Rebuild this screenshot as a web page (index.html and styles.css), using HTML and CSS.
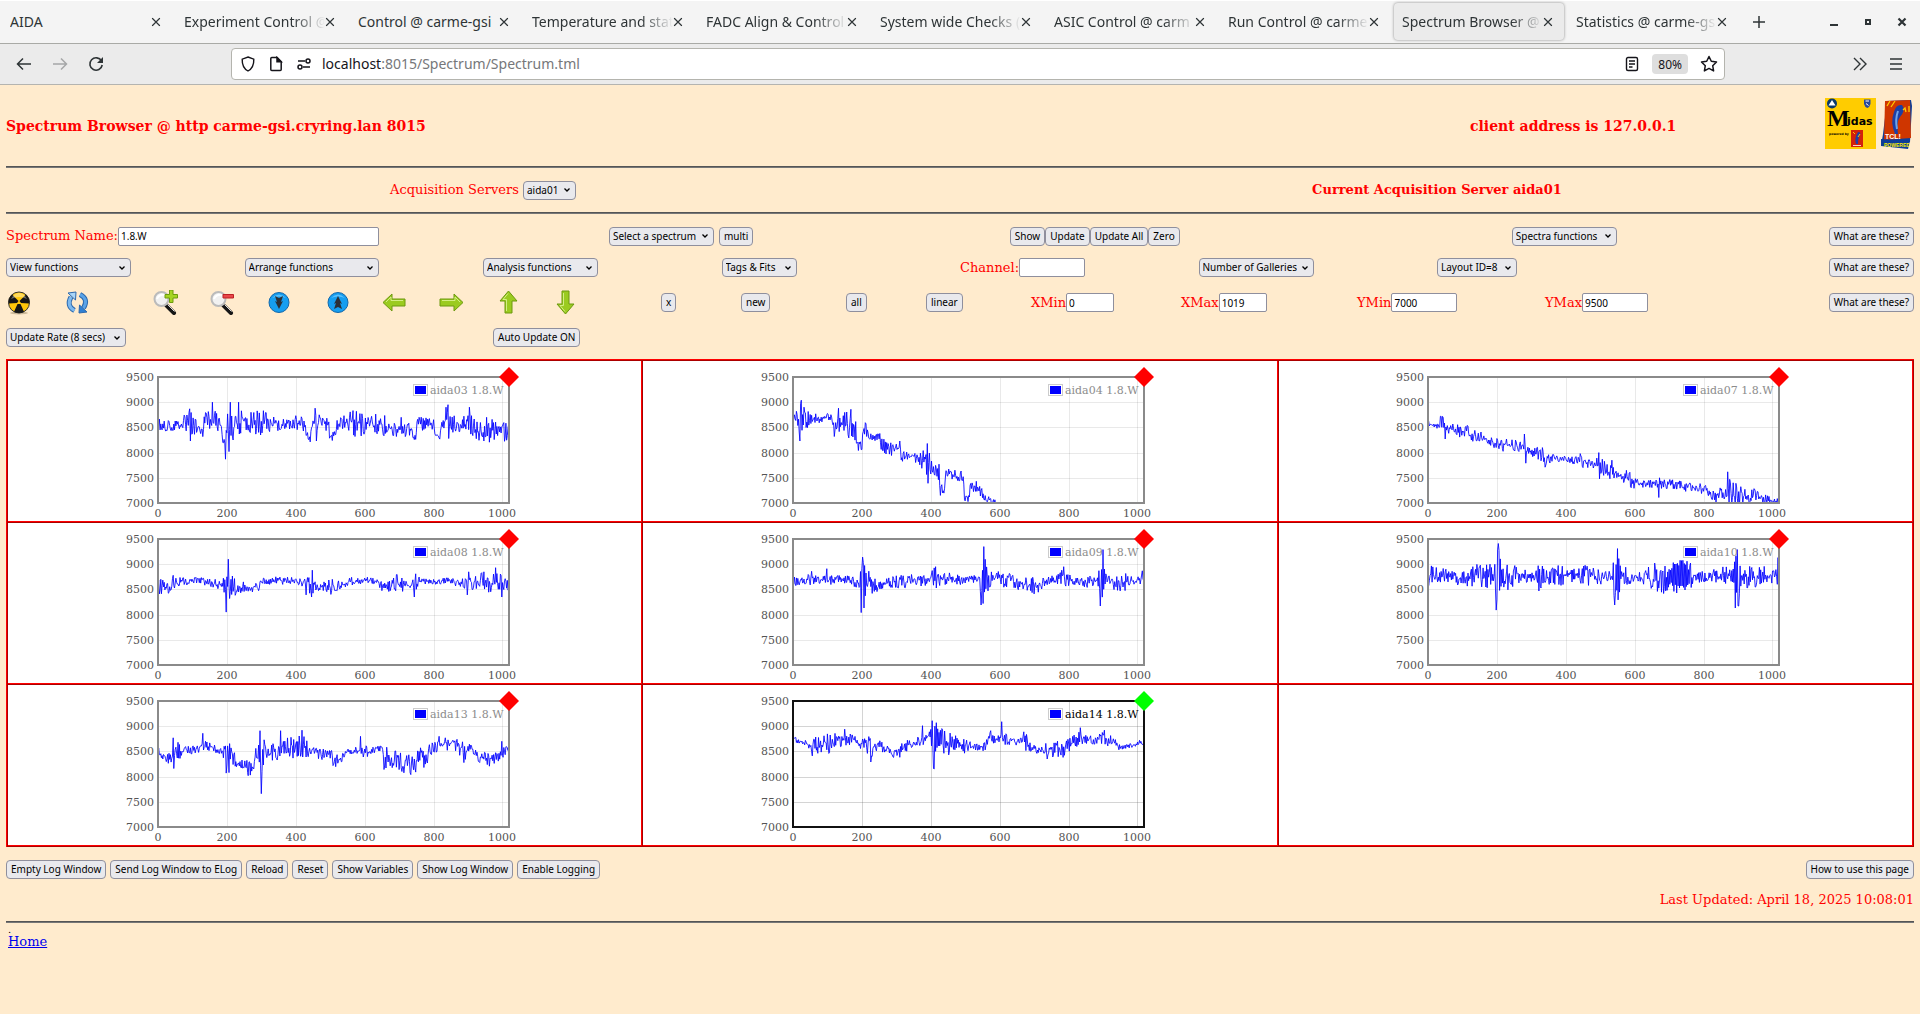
FILE: index.html
```html
<!DOCTYPE html>
<html lang="en">
<head>
<meta charset="utf-8">
<title>Spectrum Browser @ carme-gsi</title>
<link rel="stylesheet" href="styles.css">
</head>
<body>
<header class="browser">
  <nav class="tabs" aria-label="Tabs">
    <div class="tab"><span class="tab-label">AIDA</span><button class="tab-close" aria-label="Close tab"></button></div>
    <div class="tab"><span class="tab-label tab-long">Experiment Control @</span><button class="tab-close" aria-label="Close tab"></button></div>
    <div class="tab"><span class="tab-label">Control @ carme-gsi</span><button class="tab-close" aria-label="Close tab"></button></div>
    <div class="tab"><span class="tab-label tab-long">Temperature and stat</span><button class="tab-close" aria-label="Close tab"></button></div>
    <div class="tab"><span class="tab-label tab-long">FADC Align &amp; Control</span><button class="tab-close" aria-label="Close tab"></button></div>
    <div class="tab"><span class="tab-label tab-long">System wide Checks (</span><button class="tab-close" aria-label="Close tab"></button></div>
    <div class="tab"><span class="tab-label tab-long">ASIC Control @ carm</span><button class="tab-close" aria-label="Close tab"></button></div>
    <div class="tab"><span class="tab-label tab-long">Run Control @ carme</span><button class="tab-close" aria-label="Close tab"></button></div>
    <div class="tab tab-active"><span class="tab-label tab-long">Spectrum Browser @</span><button class="tab-close" aria-label="Close tab"></button></div>
    <div class="tab"><span class="tab-label tab-long">Statistics @ carme-gs</span><button class="tab-close" aria-label="Close tab"></button></div>
    <button class="icon-btn new-tab" aria-label="New tab"><svg width="14" height="14" viewBox="0 0 14 14"><path d="M7 1v12M1 7h12" stroke="#2e3436" stroke-width="1.5"/></svg></button>
    <div class="window-controls">
      <button class="icon-btn" aria-label="Minimize"><svg width="12" height="12" viewBox="0 0 12 12"><path d="M2 8h8v2H2z" fill="#2e3436"/></svg></button>
      <button class="icon-btn" aria-label="Maximize"><svg width="12" height="12" viewBox="0 0 12 12"><path d="M4 4h4v4H4z" fill="none" stroke="#2e3436" stroke-width="2"/></svg></button>
      <button class="icon-btn" aria-label="Close"><svg width="12" height="12" viewBox="0 0 12 12"><path d="M2.500 2.500l7 7M9.500 2.500l-7 7" stroke="#2e3436" stroke-width="2.200"/></svg></button>
    </div>
  </nav>
  <div class="toolbar">
    <div class="nav-buttons">
      <button class="icon-btn" aria-label="Back"><svg width="16" height="16" viewBox="0 0 16 16" fill="none" stroke="#2e3436" stroke-width="1.500"><path d="M15 8H1.500M7 2.500L1.500 8 7 13.500"/></svg></button>
      <button class="icon-btn" aria-label="Forward"><svg width="16" height="16" viewBox="0 0 16 16" fill="none" stroke="#a5a7a8" stroke-width="1.500"><path d="M1 8h13.500M9 2.500L14.500 8 9 13.500"/></svg></button>
      <button class="icon-btn" aria-label="Reload"><svg width="16" height="16" viewBox="0 0 16 16"><path d="M13.500 5A6.200 6.200 0 1 0 14.200 9" fill="none" stroke="#2e3436" stroke-width="1.600"/><path d="M15 1v6H9z" fill="#2e3436"/></svg></button>
    </div>
    <div class="urlbar">
      <svg width="16" height="16" viewBox="0 0 16 16" fill="none" stroke="#15141a" stroke-width="1.400"><path d="M8 1l5.800 2.200C14 8.500 12.500 12.500 8 15 3.500 12.500 2 8.500 2.200 3.200z"/></svg>
      <svg width="16" height="16" viewBox="0 0 16 16" fill="none" stroke="#15141a" stroke-width="1.500"><path d="M2.800 2.500q0-1 1-1H9l4.200 4.200v7.800q0 1-1 1H3.800q-1 0-1-1z"/><path d="M9 1.500v4.200h4.200z" fill="#15141a"/></svg>
      <svg width="16" height="16" viewBox="0 0 16 16" fill="none" stroke="#15141a" stroke-width="1.500"><path d="M2 5h7M7 11h7"/><circle cx="12" cy="5" r="2"/><circle cx="4" cy="11" r="2"/></svg>
      <div class="address"><span class="host">localhost</span>:8015/Spectrum/Spectrum.tml</div>
      <svg width="16" height="16" viewBox="0 0 16 16" fill="none" stroke="#15141a" stroke-width="1.400"><rect x="2.500" y="1.500" width="11" height="13" rx="1.500"/><path d="M5 5h6M5 8h6M5 11h3.500"/></svg>
      <button class="zoom-level">80%</button>
      <svg width="18" height="18" viewBox="0 0 18 18" fill="none" stroke="#15141a" stroke-width="1.500" stroke-linejoin="round"><path d="M9 1.500l2.300 4.800 5.200.700-3.800 3.700.900 5.200L9 13.400l-4.600 2.500.900-5.200L1.500 7l5.200-.700z"/></svg>
    </div>
    <div class="toolbar-end">
      <button class="icon-btn" aria-label="More tools"><svg width="16" height="16" viewBox="0 0 16 16" fill="none" stroke="#2e3436" stroke-width="1.400"><path d="M2 2l6 6-6 6M8 2l6 6-6 6"/></svg></button>
      <button class="icon-btn" aria-label="Menu"><svg width="16" height="16" viewBox="0 0 16 16" stroke="#2e3436" stroke-width="1.500"><path d="M2 3h12M2 8h12M2 13h12"/></svg></button>
    </div>
  </div>
</header>

<main class="page">
  <div class="banner">
    <h1 class="title">Spectrum Browser @ http carme-gsi.cryring.lan 8015</h1>
    <div class="title client">client address is 127.0.0.1</div>
    <div class="logos">
      <svg width="51" height="51" viewBox="0 0 51 51" role="img" aria-label="Midas">
        <rect width="51" height="51" fill="#fc0"/>
        <circle cx="7" cy="5.500" r="5" fill="#0b3a6b"/><path d="M3.500 7.500L7 2l3.500 5.500z" fill="#fff"/>
        <path d="M39 1.500h6.500V6q-1 3.500-3.200 4Q40 9.500 39 6z" fill="#2a4a9a"/><path d="M40.500 3h3.500M41 5.500l2.500 2" stroke="#fff"/>
        <text x="2" y="28" class="logo-m">M</text><text x="22" y="27" class="logo-idas">idas</text>
        <text x="4" y="37" class="logo-by">powered by</text>
        <rect x="26" y="32" width="12" height="17" fill="#d3210b"/><path d="M31 46q-2-6 2-12 4 0 1 5-1 2-1 7z" fill="#1c3fa8"/><path d="M28 34l2 2M35 36l-2 3" stroke="#fc0"/><path d="M28 47.500h8" stroke="#fff" stroke-width=".8"/>
      </svg>
      <svg width="32" height="51" viewBox="0 0 32 51" role="img" aria-label="Tcl powered">
        <path d="M2 36L6 3l24-1 1 6-2 36-28-2z" fill="#0d3d99"/><path d="M4 3L29 2l1 38-27 2z" fill="#cf3600"/>
        <path d="M14 36q-5-12-1-22 2-8 8-7 4 5-2 12-4 5-2 17z" fill="#1b3fa6"/><path d="M16 31q-2-10 1-18" fill="none" stroke="#6fa5e8" stroke-width="2"/>
        <path d="M6 8l3-5M10 9l4-6M22 12l2-2 1 4M28 8v6" fill="none" stroke="#ffc800" stroke-width="1.300"/>
        <path d="M0 41l29 2-2 8-27-3z" fill="#0d3d99"/>
        <text x="4" y="41" class="logo-tcl">TCL!</text><text x="3" y="49" class="logo-pow">POWERED</text>
      </svg>
    </div>
  </div>
  <hr>
  <div class="servers">
    <div><label for="server">Acquisition Servers</label> <select id="server"><option>aida01</option></select></div>
    <div><strong>Current Acquisition Server aida01</strong></div>
  </div>
  <hr>

  <form class="controls">
    <div class="row row-spectrum">
      <div class="field"><label for="name">Spectrum Name:</label><input id="name" class="w-name" type="text" value="1.8.W"></div>
      <div class="pair"><select class="w-105" aria-label="Spectrum"><option>Select a spectrum</option></select><button type="button">multi</button></div>
      <div class="field"><button type="button">Show</button><button type="button">Update</button><button type="button">Update All</button><button type="button">Zero</button></div>
      <div><select class="w-105" aria-label="Spectra functions"><option>Spectra functions</option></select></div>
      <button type="button" class="help">What are these?</button>
    </div>
    <div class="row row-functions">
      <div><select class="w-125" aria-label="View functions"><option>View functions</option></select></div>
      <div><select class="w-134" aria-label="Arrange functions"><option>Arrange functions</option></select></div>
      <div><select class="w-115" aria-label="Analysis functions"><option>Analysis functions</option></select></div>
      <div><select class="w-75" aria-label="Tags and fits"><option>Tags &amp; Fits</option></select></div>
      <div class="field"><label for="channel">Channel:</label><input id="channel" class="w-wide" type="text"></div>
      <div><select class="w-115" aria-label="Number of galleries"><option>Number of Galleries</option></select></div>
      <div><select class="w-80" aria-label="Layout"><option>Layout ID=8</option></select></div>
      <button type="button" class="help">What are these?</button>
    </div>
    <div class="row row-tools">
      <button type="button" class="icon-btn" aria-label="Zero all"><svg width="25" height="25" viewBox="0 0 25 25"><ellipse cx="13" cy="23" rx="9" ry="1.500" fill="#cdb999"/><circle cx="13" cy="12.500" r="10.500" fill="#ffc60a" stroke="#333"/><g fill="#161616"><path d="M11.500 11L8 3.300a10.500 10.500 0 0 1 10 0L14.500 11z" transform="rotate(180 13 12.500)"/><path d="M11 13l-8.400.500a10.500 10.500 0 0 1 3.400-9L12.500 11z"/><path d="M15 13l8.400.500a10.500 10.500 0 0 0-3.400-9L13.500 11z"/></g><path d="M5 9q3-6 8-6t8 6q-8-4-16 0z" fill="#fff" opacity=".35"/></svg></button>
      <button type="button" class="icon-btn" aria-label="Refresh"><svg width="25" height="25" viewBox="0 0 25 25" fill="none"><path d="M9.500 20.500Q1 16 6 7" stroke="#2d69ad" stroke-width="5"/><path d="M9.500 20.500Q1 16 6 7" stroke="#7db9ef" stroke-width="3"/><path d="M3 3l8-1-.5 8z" fill="#a9d5f8" stroke="#2d69ad"/><path d="M15 4.500Q24 9 18.500 18" stroke="#2d69ad" stroke-width="5"/><path d="M15 4.500Q24 9 18.500 18" stroke="#5aa3e8" stroke-width="3"/><path d="M22 22l-8 1 .5-8z" fill="#2f7fd3" stroke="#2d69ad"/></svg></button>
      <button type="button" class="icon-btn" aria-label="Zoom in"><svg width="25" height="25" viewBox="0 0 25 25"><path d="M13 15l8 8" stroke="#161616" stroke-width="4" stroke-linecap="round"/><path d="M14.500 14.500l7 7" stroke="#ddd"/><circle cx="8.500" cy="9" r="7" fill="#f1f1f1" stroke="#bbb" stroke-width="2"/><path d="M4 9q2-5 8-4" fill="none" stroke="#fff" stroke-width="2"/><path d="M16.500 0h3.500v4.500h4.500V8H20v4.500h-3.500V8H12V4.500h4.500z" fill="#a5d423" stroke="#6c9b0c"/></svg></button>
      <button type="button" class="icon-btn" aria-label="Zoom out"><svg width="25" height="25" viewBox="0 0 25 25"><path d="M13 15l8 8" stroke="#161616" stroke-width="4" stroke-linecap="round"/><path d="M14.500 14.500l7 7" stroke="#ddd"/><circle cx="8.500" cy="9" r="7" fill="#f1f1f1" stroke="#bbb" stroke-width="2"/><path d="M4 9q2-5 8-4" fill="none" stroke="#fff" stroke-width="2"/><path d="M13 4.500h10.500V8H13z" fill="#e8474a" stroke="#bd2125"/></svg></button>
      <button type="button" class="icon-btn" aria-label="Compress"><svg width="25" height="25" viewBox="0 0 25 25"><circle cx="12" cy="12.500" r="10" fill="#169ef0" stroke="#1267ab"/><path d="M5 8q7-7 14 0-7-3-14 0z" fill="#5cc0fb"/><path d="M8 6l4 2 4-2-2 6 2-1-4 8-4-8 2 1z" fill="#2b3038"/></svg></button>
      <button type="button" class="icon-btn" aria-label="Expand"><svg width="25" height="25" viewBox="0 0 25 25"><circle cx="12" cy="12.500" r="10" fill="#169ef0" stroke="#1267ab"/><path d="M5 8q7-7 14 0-7-3-14 0z" fill="#5cc0fb"/><path d="M8 19l4-2 4 2-2-6 2 1-4-8-4 8 2-1z" fill="#2b3038"/></svg></button>
      <button type="button" class="icon-btn" aria-label="Left"><svg width="25" height="25" viewBox="0 0 25 25"><path d="M1 12.500L10 4v5h13v7H10v5z" fill="#9bcb20" stroke="#6c990f"/><path d="M4 12l5-5v3.500h12" fill="none" stroke="#d4ee83"/></svg></button>
      <button type="button" class="icon-btn" aria-label="Right"><svg width="25" height="25" viewBox="0 0 25 25"><path d="M24 12.500L15 4v5H1v7h14v5z" fill="#9bcb20" stroke="#6c990f"/><path d="M3 10.500h13V7l5 5" fill="none" stroke="#d4ee83"/></svg></button>
      <button type="button" class="icon-btn" aria-label="Up"><svg width="25" height="25" viewBox="0 0 25 25"><path d="M12.500 1L4 11h5v12h7V11h5z" fill="#9bcb20" stroke="#6c990f"/><path d="M10.500 21V9.500H7l5-6" fill="none" stroke="#d4ee83"/></svg></button>
      <button type="button" class="icon-btn" aria-label="Down"><svg width="25" height="25" viewBox="0 0 25 25"><path d="M12.500 24L4 14h5V1h7v13h5z" fill="#9bcb20" stroke="#6c990f"/><path d="M10.500 3v12.500H7l5 6" fill="none" stroke="#d4ee83"/></svg></button>
      <div><button type="button">x</button></div>
      <div><button type="button">new</button></div>
      <div><button type="button">all</button></div>
      <div><button type="button">linear</button></div>
      <div class="field"><label for="xmin">XMin</label><input id="xmin" class="w-narrow" type="text" value="0"></div>
      <div class="field"><label for="xmax">XMax</label><input id="xmax" class="w-narrow" type="text" value="1019"></div>
      <div class="field"><label for="ymin">YMin</label><input id="ymin" class="w-wide" type="text" value="7000"></div>
      <div class="field"><label for="ymax">YMax</label><input id="ymax" class="w-wide" type="text" value="9500"></div>
      <button type="button" class="help">What are these?</button>
    </div>
    <div class="row row-update">
      <div><select class="w-120" aria-label="Update rate"><option>Update Rate (8 secs)</option></select></div>
      <div><button type="button">Auto Update ON</button></div>
    </div>
  </form>

  <section class="gallery" id="gallery" aria-label="Spectra"></section>

  <div class="actions">
    <button type="button">Empty Log Window</button>
    <button type="button">Send Log Window to ELog</button>
    <button type="button">Reload</button>
    <button type="button">Reset</button>
    <button type="button">Show Variables</button>
    <button type="button">Show Log Window</button>
    <button type="button">Enable Logging</button>
    <button type="button" class="help">How to use this page</button>
  </div>
  <p class="updated">Last Updated: April 18, 2025 10:08:01</p>
  <hr>
  <div class="home"><span class="dot">.</span><a href="#">Home</a></div>
</main>
<script src="charts.js"></script>
</body>
</html>
```
FILE: styles.css
```css
* { box-sizing: border-box; }

body {
  margin: 0;
  min-height: 100vh;
  background: #ffebcd;
  color: #f00;
  font: 13px/16px "DejaVu Serif", serif;
}

button, select, input {
  margin: 0;
  height: 19px;
  font: 10px/15px "Noto Sans", sans-serif;
  color: #000;
  white-space: nowrap;
}

button, select {
  padding: 0 4px;
  background: #e9e9ed;
  border: 1px solid #8f8f9d;
  border-radius: 4px;
}

select {
  appearance: none;
  padding: 0 16px 0 3px;
  background: #e9e9ed url("data:image/svg+xml,%3Csvg xmlns='http://www.w3.org/2000/svg' width='8' height='6'%3E%3Cpath d='M1.500 1.500l2.500 2.500 2.500-2.500' fill='none' stroke='black' stroke-width='1.300'/%3E%3C/svg%3E") no-repeat right 4px center;
}

input {
  padding: 0 2px;
  background: #fff;
  border: 1px solid #8f8f9d;
  border-radius: 2px;
}

.icon-btn {
  display: flex;
  align-items: center;
  justify-content: center;
  height: auto;
  padding: 0;
  background: none;
  border: 0;
}

/* Browser window */
.browser {
  background: #ebebeb;
  border-bottom: 1px solid #b4b4b0;
  color: #2e3436;
  font: 14px/20px "Noto Sans", sans-serif;
}

.tabs {
  display: flex;
  align-items: center;
  height: 44px;
  padding-bottom: 1px;
  background: #f4f4f4;
  border-top: 1px solid #fff;
  border-bottom: 1px solid #a9aaa6;
}

.tab {
  display: flex;
  align-items: center;
  flex: 0 1 170px;
  height: 37px;
  margin: 0 2px;
  padding: 0 8px;
  border-radius: 4px;
  min-width: 0;
}

.tab-active {
  background: #ebebeb;
  box-shadow: 0 0 3px #888;
}

.tab-label {
  flex: 1;
  overflow: hidden;
  white-space: nowrap;
}

.tab-long { mask-image: linear-gradient(to left, transparent, #000 32px); }

.tab-close {
  flex: none;
  width: 10px;
  height: 10px;
  margin-right: 3px;
  padding: 0;
  border: 0;
  background: url("data:image/svg+xml,%3Csvg xmlns='http://www.w3.org/2000/svg' width='10' height='10'%3E%3Cpath d='M1 1l8 8M9 1l-8 8' stroke='%232e3436' stroke-width='1.200'/%3E%3C/svg%3E") no-repeat center;
}

.new-tab { margin-left: 12px; }

.window-controls {
  display: flex;
  gap: 22px;
  margin-left: auto;
  padding-right: 12px;
}

.toolbar {
  display: flex;
  align-items: center;
  height: 40px;
}

.nav-buttons {
  display: flex;
  gap: 20px;
  width: 231px;
  padding-left: 16px;
}

.urlbar {
  display: flex;
  align-items: center;
  flex: 1;
  gap: 12px;
  height: 32px;
  padding: 0 6px 0 8px;
  background: #fff;
  border: 1px solid #b4b4ae;
  border-radius: 4px;
}

.address { flex: 1; color: #76777a; margin-left: -2px; }
.host { color: #15141a; }

.zoom-level {
  height: 20px;
  padding: 0 6px;
  background: #dedede;
  border: 0;
  font-size: 12px;
  color: #15141a;
}

.toolbar-end {
  display: flex;
  gap: 20px;
  width: 195px;
  justify-content: flex-end;
  padding-right: 16px;
}

/* Page */
.page { padding: 0 6px; }

hr {
  height: 2px;
  margin: 0;
  border: 0;
  background: #777;
  border-top: 1px solid #555;
}

.banner {
  display: grid;
  grid-template-columns: 1232fr 676fr;
  grid-template-rows: 81px;
  align-items: center;
}

.title { margin: 0; font-size: 14px; font-weight: bold; }
.client { grid-area: 1 / 2; justify-self: start; margin-left: 232px; }
.logos { grid-area: 1 / 2; display: flex; gap: 5px; justify-self: end; padding: 0 1px 4px 0; }

.logo-m { font: bold 24px "Liberation Serif", serif; }
.logo-idas { font: bold 11px "DejaVu Sans", sans-serif; }
.logo-by { font: bold 3px "DejaVu Sans", sans-serif; }
.logo-tcl { font: bold 7px "Liberation Sans", sans-serif; fill: #fff; }
.logo-pow { font: bold 5px "Liberation Sans", sans-serif; fill: #fe0; }

.servers {
  display: grid;
  grid-template-columns: 1fr 1fr;
  align-items: center;
  justify-items: center;
  height: 44px;
}

.controls {
  display: grid;
  gap: 12px;
  padding: 12px 0;
}

.row { display: grid; align-items: center; justify-items: start; }
.row > div { display: flex; }
.row-spectrum { height: 20px; grid-template-columns: 603fr 401fr 502fr 317fr 85fr; }
.row-functions { grid-template-columns: repeat(8, minmax(0, 1fr)); }
.row-tools {
  height: 27px;
  grid-template-columns:
    minmax(0, 59fr) minmax(0, 88fr) minmax(0, 57fr) minmax(0, 57fr) minmax(0, 59fr)
    minmax(0, 56fr) minmax(0, 57fr) minmax(0, 57fr) minmax(0, 57fr) minmax(0, 108fr)
    minmax(0, 80fr) minmax(0, 105fr) minmax(0, 80fr) minmax(0, 105fr) minmax(0, 150fr)
    minmax(0, 176fr) minmax(0, 188fr) minmax(0, 269fr) minmax(0, 100fr);
}
.row-update { grid-template-columns: 487fr 1421fr; }

.row .field { align-items: center; white-space: nowrap; }
.pair { gap: 5px; }
.row .help { justify-self: end; }

.w-name { width: 261px; }
.w-narrow { width: 48px; }
.w-wide { width: 66px; }
.w-75 { width: 75px; }
.w-80 { width: 80px; }
.w-105 { width: 105px; }
.w-115 { width: 115px; }
.w-120 { width: 120px; }
.w-125 { width: 125px; }
.w-134 { width: 134px; }

/* Gallery of spectra */
.gallery {
  display: grid;
  grid-template-columns: repeat(3, 1fr);
  border: 2px ridge #f00;
  border-right: 0;
  border-bottom: 0;
  background: #fff;
}

.cell {
  display: flex;
  justify-content: center;
  height: 162px;
  border: 2px ridge #f00;
  border-top: 0;
  border-left: 0;
}

.chart text { font: 11px "DejaVu Serif", serif; fill: #545454; }
.chart .x-tick { text-anchor: middle; }
.chart .y-tick { text-anchor: end; }
.chart .grid { stroke: #545454; stroke-opacity: .13; }
.chart .frame { fill: none; stroke: #8a8a8a; stroke-width: 2; }
.chart .trace { fill: none; stroke: #00f; stroke-width: 1; stroke-opacity: .85; stroke-linejoin: round; }
.chart .swatch-box { fill: #fff; stroke: #ccc; }
.chart .swatch { fill: #00f; }
.chart .legend { fill: #8c8c8c; }
.chart .marker { fill: #f00; }
.chart-active .frame { stroke: #111; }
.chart-active .grid { stroke-opacity: .25; }
.chart-active .legend { fill: #000; }
.chart-active .marker { fill: #0f0; }

/* Page footer */
.actions { display: flex; gap: 4px; padding-top: 13px; }
.actions .help { margin-left: auto; }
.updated { margin: 13px 0; text-align: right; }
.home { display: flex; flex-direction: column; align-items: flex-start; padding: 2px; }
.home a { color: #00e; }
.dot { color: #000; font-size: 10px; line-height: 9px; }
```
FILE: charts.js
```js
// Each spectrum: envelope points [channel, mean, half-width] and single peaks [channel, value].
const spectra = [
  { name: 'aida03', env: [[0,8550,110],[60,8530,70],[85,8570,200],[105,8560,180],[117,8520,90],[122,8380,90],[130,8380,90],[133,8640,90],[155,8680,200],[182,8640,180],[186,8320,100],[196,8280,100],[200,8550,280],[235,8600,220],[255,8570,100],[275,8600,190],[320,8620,170],[345,8550,90],[395,8570,90],[405,8600,180],[425,8580,110],[432,8320,90],[442,8320,90],[448,8590,80],[455,8570,250],[480,8570,150],[495,8600,100],[498,8320,70],[512,8340,80],[518,8520,90],[545,8600,160],[570,8570,240],[620,8580,130],[650,8570,210],[670,8480,80],[700,8450,140],[735,8450,110],[740,8300,60],[749,8310,70],[752,8560,110],[800,8600,110],[807,8290,60],[819,8310,60],[823,8580,80],[840,8580,240],[870,8560,110],[905,8550,170],[930,8430,140],[955,8440,200],[1000,8430,120],[1010,8400,160],[1019,8500,150]],
    peaks: [[92,8870],[94,8230],[158,9000],[196,7870],[206,8020],[210,9000],[218,8250],[234,9000],[242,8830],[298,8350],[456,8880],[460,8230],[576,8820],[706,8700],[836,8900],[842,8950],[844,8280],[904,8900],[954,8700]] },
  { name: 'aida04', env: [[0,8680,50],[12,8680,120],[22,8650,250],[34,8660,160],[55,8660,100],[75,8680,80],[112,8700,60],[118,8480,120],[130,8500,220],[150,8580,200],[174,8560,230],[182,8450,260],[190,8200,130],[200,8150,80],[206,8560,130],[220,8320,130],[238,8280,80],[248,8370,60],[256,8180,110],[275,8060,110],[300,8080,120],[315,7940,90],[350,7910,50],[370,7890,150],[390,7850,250],[402,7700,120],[420,7620,90],[430,7350,120],[440,7300,80],[444,7620,70],[470,7550,80],[494,7540,90],[498,7120,60],[512,7080,80],[515,7310,90],[540,7270,70],[560,7080,80],[585,7020,50],[600,6990,20],[610,6940,10],[1019,6900,0]],
    peaks: [[20,8230],[24,9040],[32,8900],[132,8880],[168,8860],[310,8230],[390,8180],[392,7390],[428,7150],[424,7770],[532,7430]] },
  { name: 'aida07', env: [[0,8620,30],[8,8520,60],[28,8530,60],[36,8580,160],[50,8480,130],[70,8500,50],[95,8430,130],[125,8340,140],[150,8320,80],[180,8230,60],[205,8160,130],[230,8150,90],[270,8130,90],[290,8070,110],[310,8000,80],[340,7930,140],[370,7880,50],[410,7860,50],[435,7820,110],[480,7780,70],[500,7740,170],[530,7600,130],[560,7550,80],[585,7460,150],[610,7380,60],[640,7390,60],[680,7370,90],[730,7370,70],[760,7310,90],[810,7260,90],[835,7160,110],[865,7220,160],[890,7160,190],[925,7150,160],[960,7160,90],[990,7040,80],[1019,7020,50]],
    peaks: [[36,8720],[50,8270],[280,8370],[284,7790],[340,7710],[442,7980],[496,8000],[498,7480],[534,7850],[670,7110],[672,7500],[870,7620],[876,7470],[836,7010],[886,7400]] },
  { name: 'aida08', env: [[0,8580,140],[30,8540,110],[50,8640,80],[100,8680,60],[140,8650,60],[180,8580,90],[197,8550,200],[215,8580,180],[250,8530,90],[290,8560,90],[310,8690,70],[380,8670,60],[420,8640,60],[445,8580,150],[475,8560,60],[505,8560,130],[530,8590,60],[570,8690,80],[630,8660,50],[650,8560,90],[690,8620,150],[730,8560,60],[745,8640,130],[770,8660,40],[840,8670,60],[880,8620,80],[940,8660,160],[960,8580,120],[985,8640,180],[1010,8600,130],[1019,8550,50]],
    peaks: [[4,8410],[44,8780],[198,8050],[204,9100],[208,8320],[430,8390],[446,8350],[448,8880],[502,8400],[744,8350],[748,8810],[898,8390],[902,8850],[946,8850],[980,8930],[998,8350]] },
  { name: 'aida09', env: [[0,8690,90],[90,8690,80],[165,8700,70],[180,8630,140],[194,8600,180],[200,8600,520],[206,8600,480],[212,8600,260],[235,8560,120],[270,8640,70],[300,8650,100],[360,8680,100],[395,8650,80],[410,8750,170],[450,8680,130],[500,8700,60],[540,8700,70],[546,8700,400],[556,8700,500],[562,8700,260],[580,8740,100],[620,8680,130],[660,8630,110],[705,8560,140],[740,8670,60],[790,8740,140],[815,8680,70],[835,8640,130],[885,8680,120],[892,8720,440],[902,8720,430],[908,8700,130],[960,8640,150],[1000,8690,60],[1019,8690,80]],
    peaks: [[54,8860],[98,8910],[198,8040],[202,9140],[206,8130],[546,8190],[552,8220],[554,9350],[786,8950],[700,8410],[892,8170],[900,9290],[1014,8870]] },
  { name: 'aida10', env: [[0,8780,190],[50,8760,110],[110,8740,140],[140,8780,170],[185,8760,190],[194,8780,200],[197,8750,620],[205,8750,600],[212,8750,280],[230,8750,210],[270,8760,130],[312,8760,80],[322,8730,220],[345,8760,130],[380,8780,180],[410,8760,90],[450,8760,180],[500,8740,120],[534,8770,80],[540,8750,540],[550,8750,520],[560,8760,220],[600,8770,80],[630,8780,160],[665,8740,240],[690,8720,240],[705,8760,280],[730,8760,370],[750,8760,330],[775,8740,120],[820,8770,90],[880,8780,160],[889,8750,300],[893,8720,560],[903,8720,560],[910,8750,200],[960,8750,180],[1012,8760,120],[1019,8760,280]],
    peaks: [[198,8090],[204,9410],[542,8190],[550,9310],[892,8130],[898,9290],[902,8170],[1016,9130],[1018,8410]] },
  { name: 'aida13', env: [[0,8510,60],[12,8380,80],[36,8350,90],[45,8420,250],[60,8480,160],[80,8520,60],[110,8530,70],[130,8640,100],[160,8580,50],[180,8460,70],[194,8480,120],[200,8350,270],[215,8400,180],[230,8260,60],[255,8270,200],[275,8210,140],[290,8480,150],[300,8400,300],[320,8500,160],[350,8490,120],[362,8600,140],[390,8580,180],[420,8550,210],[450,8460,110],[490,8450,80],[508,8360,130],[530,8330,100],[550,8520,50],[590,8510,60],[608,8450,130],[625,8520,60],[652,8510,80],[658,8400,250],[670,8300,120],[700,8330,190],[735,8240,160],[770,8380,200],[800,8560,120],[840,8640,110],[870,8600,100],[890,8440,180],[910,8570,60],[925,8410,90],[960,8330,100],[990,8420,110],[1005,8480,90],[1019,8580,30]],
    peaks: [[44,8770],[46,8160],[130,8860],[198,8070],[206,8080],[296,8910],[300,7660],[302,8100],[356,8910],[418,8920],[588,8800],[656,8140],[732,8080],[816,8800],[868,8740],[998,8700]] },
  { name: 'aida14', active: true, env: [[0,8750,60],[30,8700,50],[50,8600,50],[58,8620,210],[75,8640,120],[110,8680,170],[150,8750,100],[180,8720,80],[195,8640,60],[215,8660,150],[228,8580,190],[245,8590,120],[270,8540,80],[295,8440,60],[316,8540,120],[335,8640,80],[370,8730,90],[395,8780,160],[403,8800,280],[420,8780,300],[440,8700,200],[470,8660,130],[500,8600,110],[530,8580,50],[560,8620,110],[568,8780,100],[595,8720,80],[605,8800,140],[625,8700,80],[660,8680,60],[678,8720,230],[690,8560,70],[720,8520,80],[755,8560,140],[790,8560,130],[815,8730,120],[850,8760,90],[880,8700,80],[905,8760,140],[930,8700,80],[950,8570,50],[985,8600,60],[1005,8690,40],[1019,8630,20]],
    peaks: [[56,8410],[104,8460],[150,8940],[226,8290],[376,9010],[404,9110],[408,8160],[410,8150],[416,9070],[452,8430],[574,8910],[606,9090],[738,8350],[784,8380],[834,8970],[904,8920]] },
];

const LEFT = 34, TOP = 16, WIDTH = 351, HEIGHT = 126;
const xOf = c => LEFT + c * WIDTH / 1019;
const yOf = v => TOP + (9500 - v) * HEIGHT / 2500;

function random(seed) {
  return () => (seed = (seed * 16807) % 2147483647) / 2147483647;
}

function envelopeAt(env, c) {
  let i = 1;
  while (i < env.length - 1 && env[i][0] < c) i++;
  const [a, b] = [env[i - 1], env[i]];
  const t = (c - a[0]) / (b[0] - a[0]);
  return [a[1] + (b[1] - a[1]) * t, a[2] + (b[2] - a[2]) * t];
}

// The wide bursts ring up and down; the rest is irregular noise.
function trace(s, seed) {
  const rnd = random(seed);
  const peaks = new Map(s.peaks);
  const pts = [];
  let sign = 1;
  for (let c = 0; c <= 1019; c += 2) {
    const [mean, amp] = envelopeAt(s.env, c);
    sign = amp > 250 || rnd() < .55 ? -sign : sign;
    const swing = amp > 250 ? .4 + .6 * rnd() : 1.3 * Math.pow(rnd(), 1.2);
    const v = peaks.has(c) ? peaks.get(c) : mean + sign * amp * swing;
    pts.push(xOf(c).toFixed(1) + ',' + yOf(v).toFixed(1));
  }
  return pts.join(' ');
}

function chart(s, i) {
  let grid = '', ticks = '';
  for (let x = 0; x <= 1000; x += 200) {
    const px = Math.round(xOf(x));
    if (x) grid += `<path class="grid" d="M${px + .5} ${TOP}v${HEIGHT}"/>`;
    ticks += `<text class="x-tick" x="${px}" y="156">${x}</text>`;
  }
  for (let y = 7000; y <= 9500; y += 500) {
    const py = Math.round(yOf(y));
    if (y > 7000 && y < 9500) grid += `<path class="grid" d="M${LEFT} ${py + .5}h${WIDTH}"/>`;
    ticks += `<text class="y-tick" x="30" y="${py + 4}">${y}</text>`;
  }
  const right = LEFT + WIDTH;
  return `<div class="cell"><svg class="chart${s.active ? ' chart-active' : ''}" width="402" height="160" viewBox="0 0 402 160">
    <clipPath id="clip${i}"><rect x="${LEFT}" y="${TOP}" width="${WIDTH}" height="${HEIGHT}"/></clipPath>
    ${grid}<polyline class="trace" clip-path="url(#clip${i})" points="${trace(s, 1237 + i * 977)}"/>
    <rect class="frame" x="${LEFT}" y="${TOP}" width="${WIDTH}" height="${HEIGHT}"/>${ticks}
    <rect class="swatch-box" x="289.500" y="23.500" width="14" height="11"/><rect class="swatch" x="291" y="25" width="11" height="8"/>
    <text class="legend" x="306" y="33">${s.name} 1.8.W</text>
    <path class="marker" d="M${right} ${TOP - 10}l10 10-10 10-10-10z"/></svg></div>`;
}

document.getElementById('gallery').innerHTML = spectra.map(chart).join('') + '<div class="cell"></div>';
```
